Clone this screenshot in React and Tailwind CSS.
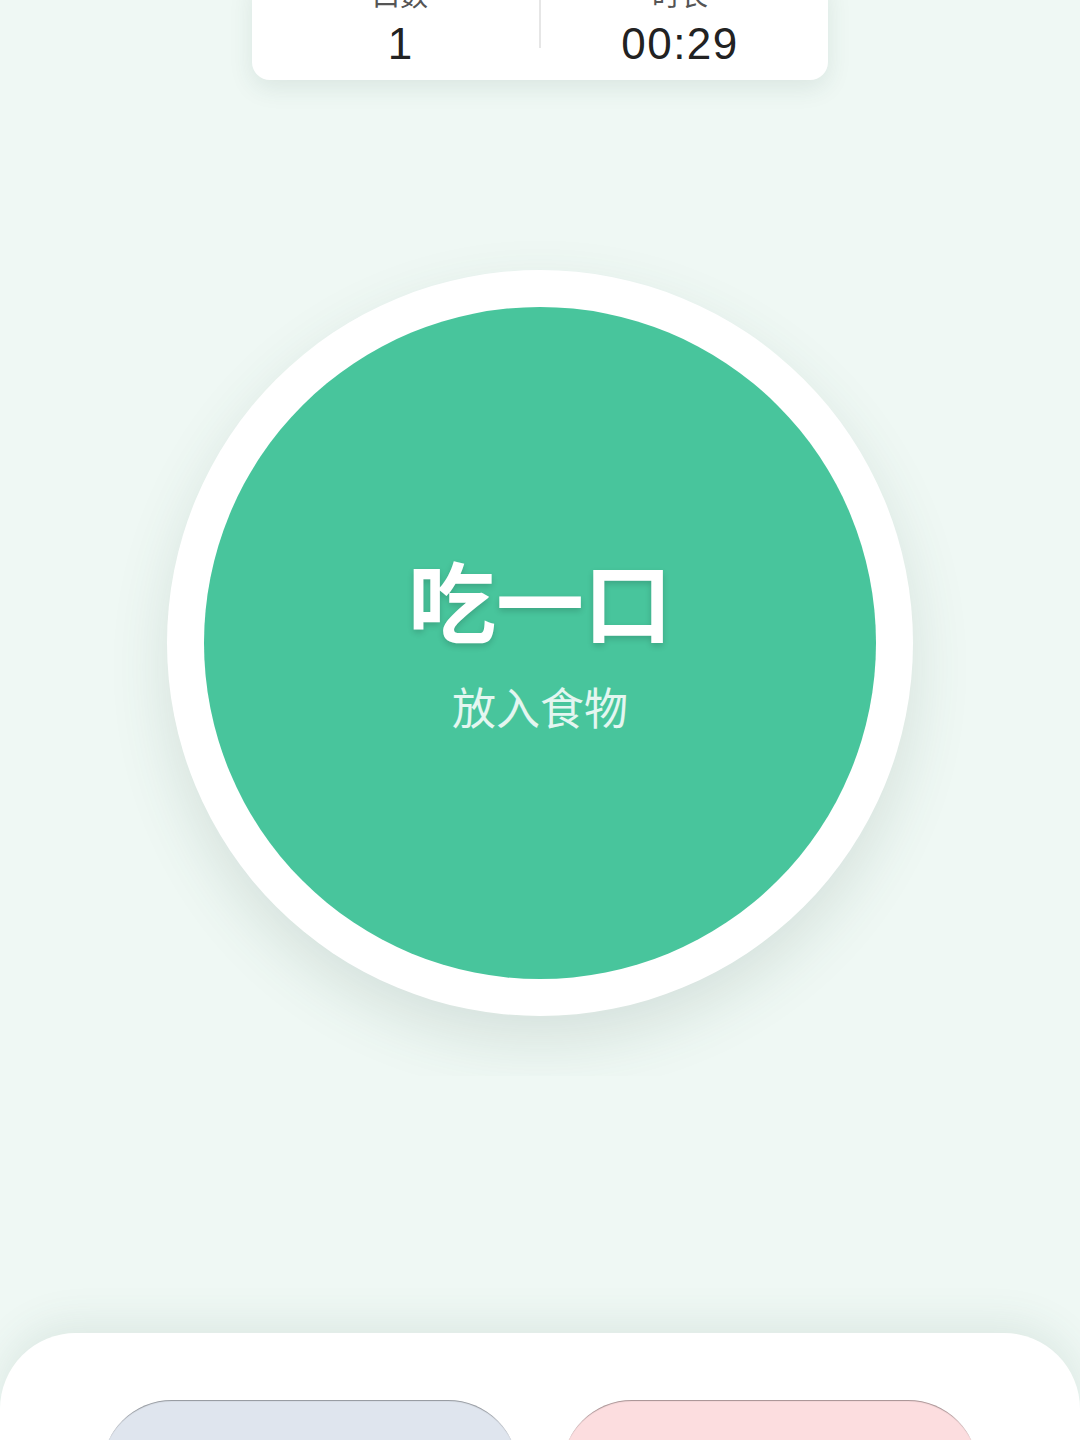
export default function App() {
  const cjk = { fontFamily: '"Noto Sans CJK SC", "Noto Sans", sans-serif' };
  const num = { fontFamily: '"Liberation Sans", Arial, "Noto Sans CJK SC", sans-serif' };
  return (
    <div className="w-[1080px] h-[1440px] bg-[#EFF8F4] overflow-hidden flex flex-col items-center" style={cjk}>
      {/* stats card */}
      <div className="w-[576px] h-[104px] mt-[-24px] px-[9px] bg-white rounded-[18px] shadow-[0_8px_24px_rgba(40,80,70,0.10)] flex shrink-0">
        <div className="flex-1 flex flex-col items-center">
          <div className="text-[28px] leading-[36px] text-[#555]">口数</div>
          <div className="text-[44px] leading-[48px] text-[#222] mt-[8px]" style={num}>1</div>
        </div>
        <div className="w-[2px] h-[72px] bg-[#E6E6E6]" />
        <div className="flex-1 flex flex-col items-center">
          <div className="text-[28px] leading-[36px] text-[#555]">时长</div>
          <div className="text-[44px] leading-[48px] text-[#222] mt-[8px] tracking-[1.5px]" style={num}>00:29</div>
        </div>
      </div>

      {/* main button */}
      <div className="mt-[130px] p-[60px] overflow-hidden shrink-0">
        <div className="w-[746px] h-[746px] rounded-full bg-white shadow-[0_24px_60px_rgba(60,90,80,0.14)] flex items-center justify-center">
          <div className="w-[672px] h-[672px] rounded-full bg-[#48C59C] flex flex-col items-center justify-center">
            <div className="text-[88px] leading-[100px] font-bold text-white [text-shadow:0_3px_6px_rgba(0,0,0,0.16)] mt-[-6px]">吃一口</div>
            <div className="text-[44px] leading-[52px] text-white/85 mt-[32px]">放入食物</div>
          </div>
        </div>
      </div>

      <div className="flex-1" />

      {/* bottom panel */}
      <div className="w-[1080px] h-[107px] shrink-0 bg-white rounded-t-[76px] shadow-[0_-10px_40px_rgba(60,100,90,0.10)] flex gap-[44px] px-[102px] pt-[67px]">
        <div className="flex-1 h-[200px] rounded-[70px] bg-[#DFE5EE] shadow-[inset_0_2px_1px_-1px_rgba(0,0,0,0.35)]" />
        <div className="flex-1 h-[200px] rounded-[70px] bg-[#FCDDDF] shadow-[inset_0_2px_1px_-1px_rgba(0,0,0,0.35)]" />
      </div>
    </div>
  );
}
